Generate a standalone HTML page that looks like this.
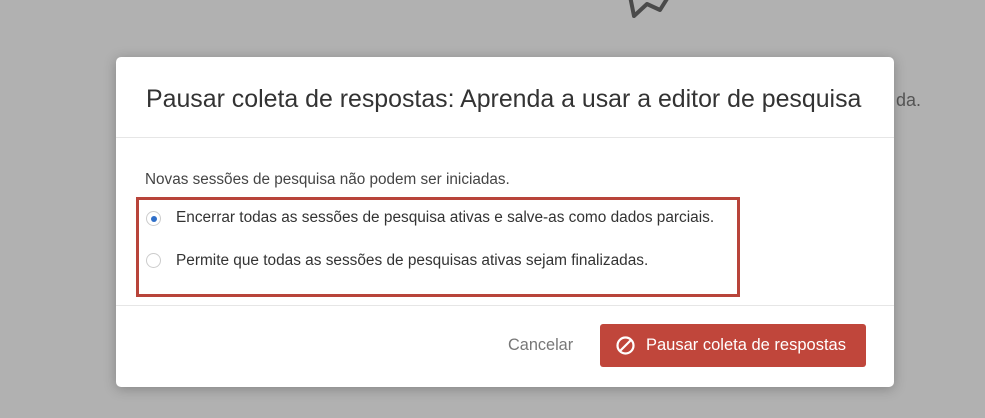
<!DOCTYPE html>
<html><head><meta charset="utf-8"><style>
body{margin:0;width:985px;height:418px;background:#b1b1b1;position:relative;overflow:hidden;font-family:"Liberation Sans",sans-serif;}
.bgtext{position:absolute;left:896px;top:90px;font-size:18px;color:#555;}
.modal{position:absolute;left:116px;top:57px;width:778px;height:330px;background:#fff;border-radius:5px;box-shadow:0 2px 12px rgba(0,0,0,.25);}
h1{position:absolute;left:30px;top:28px;margin:0;font-weight:normal;font-size:24.9px;color:#333;white-space:nowrap;}
.hl{position:absolute;left:0;right:0;height:1px;background:#e6e6e6;}
.p{position:absolute;left:29px;top:114px;font-size:15.3px;color:#444;white-space:nowrap;}
.box{position:absolute;left:20px;top:140px;width:598px;height:94px;border:3px solid #b8443a;}
.opt{position:absolute;left:30px;font-size:15.4px;color:#333;white-space:nowrap;}
.r{position:absolute;width:15px;height:15px;border:1px solid #ccc;border-radius:50%;box-sizing:border-box;}
.r.on::after{content:"";position:absolute;left:3.5px;top:3.5px;width:6px;height:6px;border-radius:50%;background:#2f6fc9;}
.cancel{position:absolute;left:392px;top:279px;font-size:16.3px;color:#777;}
.btn{position:absolute;left:484px;top:267px;width:266px;height:43px;background:#c0463b;border-radius:3px;color:#fff;font-size:16.5px;}
</style></head><body>
<svg style="position:absolute;left:620px;top:0" width="80" height="24"><polyline points="10,-4 14,16 27,4 40,10 50,-6" fill="none" stroke="#4a4a4a" stroke-width="4" stroke-linejoin="round" stroke-linecap="round"/></svg>
<div class="bgtext">da.</div>
<div class="modal">
<h1>Pausar coleta de respostas: Aprenda a usar a editor de pesquisa</h1>
<div class="hl" style="top:80px"></div>
<div class="p">Novas sessões de pesquisa não podem ser iniciadas.</div>
<div class="box"></div>
<div class="r on" style="left:30px;top:154px"></div>
<div class="opt" style="left:60px;top:152px">Encerrar todas as sessões de pesquisa ativas e salve-as como dados parciais.</div>
<div class="r" style="left:30px;top:196px"></div>
<div class="opt" style="left:60px;top:195px">Permite que todas as sessões de pesquisas ativas sejam finalizadas.</div>
<div class="hl" style="top:248px"></div>
<div class="cancel">Cancelar</div>
<div class="btn">
<svg style="position:absolute;left:15px;top:11px" width="21" height="21"><circle cx="10.5" cy="10.5" r="8" fill="none" stroke="#fff" stroke-width="2.2"/><line x1="5" y1="16" x2="16" y2="5" stroke="#fff" stroke-width="2.2"/></svg>
<span style="position:absolute;left:46px;top:12px">Pausar coleta de respostas</span>
</div>
</div>
</body></html>
